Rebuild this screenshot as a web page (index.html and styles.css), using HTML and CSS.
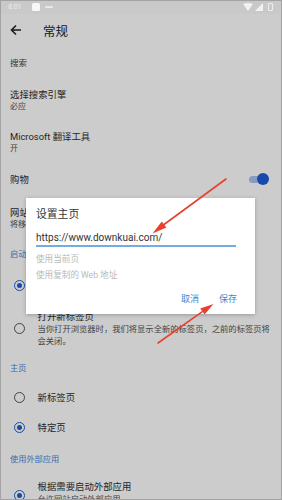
FILE: index.html
```html
<!DOCTYPE html>
<html lang="zh">
<head>
<meta charset="utf-8">
<title>常规</title>
<link rel="stylesheet" href="styles.css">
</head>
<body>
<div class="screen">
  <div class="statusbar">
    <div class="sb-left">
      <span class="time">8:01</span>
      <span class="sq"></span>
      <svg class="sb-icon" width="8" height="6" viewBox="0 0 8 6"><path d="M1 3 h6" stroke="#e9e9e9" stroke-width="2" stroke-linecap="round"/></svg>
    </div>
    <div class="sb-right">
      <svg width="10" height="8" viewBox="0 0 10 8"><path d="M0 1 Q5 -1 10 1 L5 8 Z" fill="#f2f2f2"/></svg>
      <svg width="8" height="8" viewBox="0 0 8 8"><path d="M8 0 L8 8 L0 8 Z" fill="#f2f2f2"/></svg>
      <span class="battery"></span>
    </div>
  </div>

  <div class="page">
    <div class="toolbar">
      <svg class="back" width="12" height="12" viewBox="0 0 12 12"><path d="M11 6 H1.5 M6 1.5 L1.5 6 L6 10.5" fill="none" stroke="#222" stroke-width="1.6"/></svg>
      <span class="title">常规</span>
    </div>

    <div class="cat">搜索</div>
    <div class="item two h44">
      <div class="t">选择搜索引擎</div>
      <div class="s">必应</div>
    </div>
    <div class="item two h40">
      <div class="t">Microsoft 翻译工具</div>
      <div class="s">开</div>
    </div>
    <div class="item one h34 row">
      <div class="t">购物</div>
      <div class="toggle"><span class="track"></span><span class="knob"></span></div>
    </div>
    <div class="item two h44">
      <div class="t">网站权限</div>
      <div class="s">将移至新的设置页面</div>
    </div>
    <div class="sec h26">启动</div>
    <div class="ritem h38">
      <span class="radio on"></span>
      <div class="rtext"><div class="t">继续上次的浏览</div></div>
    </div>
    <div class="ritem h48">
      <span class="radio"></span>
      <div class="rtext">
        <div class="t">打开新标签页</div>
        <div class="d">当你打开浏览器时，我们将显示全新的标签页，之前的标签页将会关闭。</div>
      </div>
    </div>
    <div class="sec h30">主页</div>
    <div class="ritem h30">
      <span class="radio"></span>
      <div class="rtext"><div class="t">新标签页</div></div>
    </div>
    <div class="ritem h30">
      <span class="radio on"></span>
      <div class="rtext"><div class="t">特定页</div></div>
    </div>
    <div class="sec h32">使用外部应用</div>
    <div class="ritem top">
      <span class="radio on"></span>
      <div class="rtext">
        <div class="t">根据需要启动外部应用</div>
        <div class="d">允许网站启动外部应用。</div>
      </div>
    </div>
  </div>

  <div class="scrim"></div>

  <div class="dialog">
    <div class="dtitle">设置主页</div>
    <div class="field">https://www.downkuai.com/</div>
    <div class="opt">使用当前页</div>
    <div class="opt">使用复制的 Web 地址</div>
    <div class="actions">
      <span class="btn">取消</span>
      <span class="btn">保存</span>
    </div>
  </div>

  <svg class="arrows" width="282" height="500" viewBox="0 0 282 500">
    <line x1="226" y1="179" x2="164" y2="224.5" stroke="#e8402f" stroke-width="1.6" stroke-linecap="round"/>
    <polygon points="152.5,233.5 166.4,227.4 161.8,221.4" fill="#e8402f"/>
    <line x1="158" y1="343" x2="202" y2="311.8" stroke="#e8402f" stroke-width="1.6" stroke-linecap="round"/>
    <polygon points="213.5,304 204.6,314.6 200.2,308.4" fill="#e8402f"/>
  </svg>

  <div class="frame"></div>
</div>
</body>
</html>
```

FILE: styles.css
```css
* { box-sizing: border-box; }
html, body { margin: 0; padding: 0; }
body {
  font-family: Roboto, "Noto Sans CJK SC", sans-serif;
  background: #ffffff;
  color: #333;
}
.screen {
  position: relative;
  width: 282px;
  height: 500px;
  overflow: hidden;
}
.statusbar {
  height: 14px;
  background: #c9c9c9;
  display: flex;
  align-items: center;
  justify-content: space-between;
  padding: 0 9px 0 8px;
}
.sb-left, .sb-right { display: flex; align-items: center; }
.time { font-size: 7px; color: #ececec; width: 24px; }
.sq { width: 8px; height: 8px; background: #f7f7f7; border-radius: 1.5px; margin-right: 5px; }
.sb-right { gap: 2px; }
.battery {
  width: 5px; height: 8px;
  border: 1px solid #eeeeee;
  border-radius: 1px;
  margin-left: 3px;
}
.page { background: #fff; }
.toolbar {
  height: 32px;
  display: flex;
  align-items: center;
  padding-left: 10px;
}
.back { margin-right: 21px; }
.title { font-size: 12.5px; color: #222; }
.cat {
  height: 32px;
  display: flex; align-items: center;
  padding-left: 10px;
  font-size: 8.5px;
  color: #444;
}
.item { padding: 0 13px 0 10px; display: flex; flex-direction: column; justify-content: center; }
.item.row { flex-direction: row; align-items: center; justify-content: space-between; }
.t { font-size: 9.4px; line-height: 13px; color: #2e2e2e; white-space: nowrap; }
.s { font-size: 8px; line-height: 12px; color: #555; }
.h44 { height: 44px; }
.h40 { height: 40px; }
.h34 { height: 34px; }
.h26 { height: 26px; }
.h38 { height: 38px; }
.h48 { height: 48px; }
.h30 { height: 30px; }
.h32 { height: 32px; }
.toggle { position: relative; width: 20px; height: 12px; display: flex; align-items: center; }
.track { width: 16px; height: 7px; border-radius: 4px; background: #a9c3ef; }
.knob {
  position: absolute; right: 0; top: 0;
  width: 12px; height: 12px; border-radius: 50%;
  background: #1d5dd6;
}
.sec {
  display: flex; align-items: center;
  padding-left: 10px;
  font-size: 8.2px;
  color: #4d86db;
}
.ritem {
  display: flex; align-items: center;
  padding: 0 10px 0 13.5px;
}
.ritem.top { padding-top: 5.5px; align-items: flex-start; }
.ritem.top .radio { margin-top: 10px; }
.radio {
  flex: none;
  width: 11px; height: 11px;
  border-radius: 50%;
  border: 1.4px solid #555;
  margin-right: 13px;
  display: flex; align-items: center; justify-content: center;
}
.radio.on { border-color: #1d5dd6; }
.radio.on::after {
  content: "";
  width: 5px; height: 5px; border-radius: 50%;
  background: #1d5dd6;
}
.rtext { flex: 1; }
.d { font-size: 8.3px; line-height: 12px; color: #555; }
.scrim {
  position: absolute;
  left: 0; right: 0; top: 14px; bottom: 0;
  background: rgba(0, 0, 0, 0.2);
}
.dialog {
  position: absolute;
  left: 26px; top: 198px;
  width: 229px; height: 116px;
  background: #fff;
  box-shadow: 0 1px 4px rgba(0,0,0,0.25);
  padding: 10px 19px 8px 10px;
  display: flex; flex-direction: column;
}
.dtitle { font-size: 10.8px; line-height: 14px; color: #333; }
.field {
  margin-top: 9px;
  font-size: 10px;
  line-height: 14px;
  color: #333;
  border-bottom: 2px solid #74ace0;
}
.opt { font-size: 8.6px; line-height: 16px; color: #b9b9b9; }
.opt:first-of-type { margin-top: 4px; }
.field + .opt { margin-top: 4px; }
.actions {
  margin-top: 9px;
  display: flex; justify-content: flex-end;
  gap: 20px;
  margin-right: -1px;
}
.btn { font-size: 9px; line-height: 14px; color: #3f84d2; }
.arrows { position: absolute; left: 0; top: 0; pointer-events: none; }
.frame {
  position: absolute; inset: 0;
  border: 1px solid #a3a3a3;
  pointer-events: none;
}
```
